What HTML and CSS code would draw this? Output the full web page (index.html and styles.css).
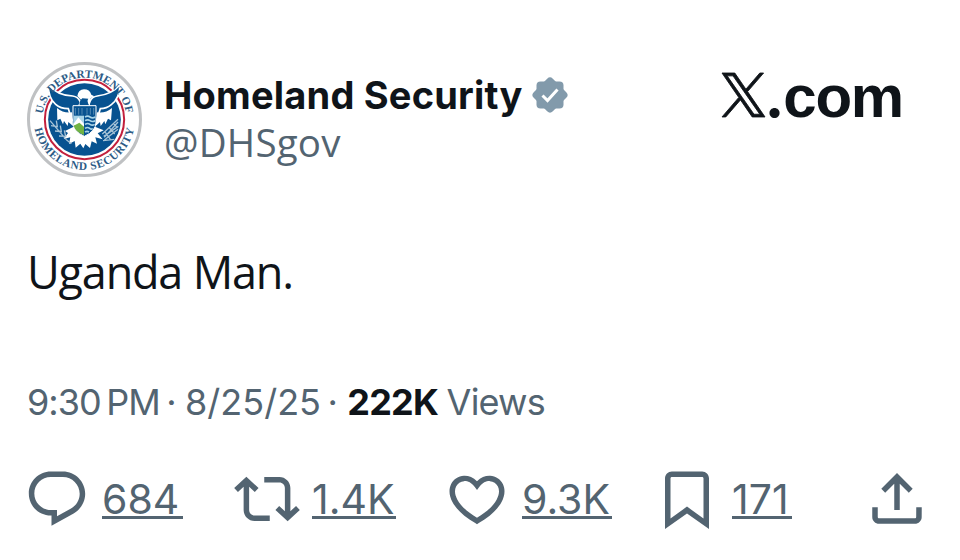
FILE: index.html
```html
<!DOCTYPE html>
<html lang="en">

<head>
    <meta charset="UTF-8">
    <meta name="viewport" content="width=device-width, initial-scale=1.0">
    <title>Homeland Security on X</title>
    <link rel="stylesheet" href="styles.css">
</head>

<body>
    <article class="post">
        <header class="post-header">
            <svg class="avatar" viewBox="20 20 345 345">
                <defs>
                    <path id="seal-top" d="M66 193a126 126 0 0 1 252 0a126 126 0 0 1-12 54" />
                    <path id="seal-bottom" d="M41 193a151 151 0 0 0 302 0" />
                </defs>
                <circle cx="192.500" cy="192.500" r="168" fill="#fff" stroke="#bfc1c3" stroke-width="9" />
                <circle cx="192.500" cy="192.500" r="119" fill="#fff" stroke="#c2203d" stroke-width="6" />
                <circle cx="192.500" cy="192.500" r="109" fill="#075290" />
                <path d="M84 88q26 32 73 34q16 2 22 16l4 12h22l4-12q6-14 22-16q45-6 68-34q-1 40-26 60q-14 12-33 12l-11 35h-74l-11-35q-24 0-38-13q-22-18-22-59z" fill="#075290" stroke="#fff" stroke-width="5" />
                <path d="M171 122q3-19 20-20q17 0 22 16l9 5-11 6-3 22h-35l9-18z" fill="#fff" />
                <path d="M178 151q-2-14 8-22l18 1q-6 6 3 21z" fill="#075290" />
                <path d="M110 158q20 17 45 13l3 41-14-12-2 12-11-15-3 10-8-17-9 5zM275 158q-20 17-45 13l-4 41 13-12 2 12 11-15 3 10 8-17 9 5z" fill="#fff" />
                <path d="M134 227l26-13 32 27 32-27 26 11-18 9 15 18-22-6 5 19-16-7-5 20-14-12-6 13-9-14-14 12-3-20-17 9 4-20-20 5 13-18z" fill="#fff" />
                <path d="M158 151h69v49q0 28-35 43q-34-15-34-43z" fill="#075290" stroke="#fff" stroke-width="3" />
                <path d="M165 158v20M175 158v20M185 158v20M200 158v20M210 158v20M220 158v20" stroke="#78a5c3" stroke-width="2" />
                <path d="M160 181h31v27h-31z" fill="#a8d4e8" />
                <path d="M160 205l14-19 17 20v31q-26-10-31-32z" fill="#fff" />
                <path d="M160 211l17-9 14 12v25q-26-10-31-28z" fill="#71b343" />
                <path d="M194 185q8-5 15 0t16 0M194 196q8-5 15 0t16 0M194 207q8-5 15 0t14 0M194 219q8-5 14 0t9 0M194 230q6-4 12 0" fill="none" stroke="#a8d4e8" stroke-width="5" />
                <path d="M89 196l49 57M92 211l19 3-3-18M104 227l19 2-3-18M116 242l20 1-4-18M138 253l15 12M252 246l41-46M246 236l47-44M250 243l44-30M252 254l41-32M248 256l34-4M253 228l17 24M266 216l17 20M280 205l11 12" fill="none" stroke="#a5c2d6" stroke-width="4" />
                <text class="seal-text"><textPath href="#seal-top" startOffset="17" textLength="360">U.S. DEPARTMENT OF</textPath></text>
                <text class="seal-text"><textPath href="#seal-bottom" startOffset="27" textLength="420">HOMELAND SECURITY</textPath></text>
            </svg>
            <div class="author">
                <div class="name-row">
                    <span class="name">Homeland Security</span>
                    <svg class="badge" viewBox="0 0 36 36">
                        <rect x="4.500" y="4.500" width="27" height="27" rx="4" />
                        <rect x="4.500" y="4.500" width="27" height="27" rx="4" transform="rotate(45 18 18)" />
                        <path d="M10.500 18.500l5 5L25.500 12.500" />
                    </svg>
                </div>
                <div class="handle">@DHSgov</div>
            </div>
            <div class="brand">
                <svg class="brand-logo" viewBox="0 0 1200 1227">
                    <path d="M714.163 519.284L1160.890 0H1055.030L667.137 450.887L357.328 0H0L468.492 681.821L0 1226.370H105.866L515.491 750.218L842.672 1226.370H1200L714.137 519.284ZM569.165 687.828L521.697 619.934L144.011 79.694H306.615L611.412 515.685L658.880 583.579L1055.080 1150.300H892.476Z" />
                </svg>
                <span class="brand-text"><span class="brand-dot">.</span>com</span>
            </div>
        </header>

        <p class="post-text">Uganda Man.</p>

        <div class="meta">
            <span class="time">9:30&#8201;PM</span>
            <span class="dot">·</span>
            <span class="date">8/25/25</span>
            <span class="dot">·</span>
            <span class="views">222K</span>
            <span class="views-label">Views</span>
        </div>

        <footer class="actions">
            <div class="action">
                <svg class="icon" viewBox="0 0 24 24">
                    <path d="M1.751 10c0-4.420 3.584-8 8.005-8h4.366c4.490 0 8.129 3.640 8.129 8.130 0 2.960-1.607 5.680-4.196 7.110l-8.054 4.460v-3.690h-.067c-4.490.1-8.183-3.510-8.183-8.010zm8.005-6c-3.317 0-6.005 2.690-6.005 6 0 3.370 2.770 6.080 6.138 6.010l.351-.010h1.761v2.300l5.087-2.810c1.951-1.080 3.163-3.130 3.163-5.360 0-3.390-2.744-6.130-6.129-6.130H9.756z" />
                </svg>
                <span class="count replies">684</span>
            </div>
            <div class="action">
                <svg class="icon" viewBox="0 0 24 24">
                    <path d="M4.500 3.880l4.432 4.140-1.364 1.460L5.500 7.550V16c0 1.100.896 2 2 2H13v2H7.500c-2.209 0-4-1.790-4-4V7.550L1.432 9.480.068 8.020 4.500 3.880zM16.500 6H11V4h5.500c2.209 0 4 1.790 4 4v8.450l2.068-1.930 1.364 1.460-4.432 4.140-4.432-4.140 1.364-1.460 2.068 1.930V8c0-1.100-.896-2-2-2z" />
                </svg>
                <span class="count reposts">1.4K</span>
            </div>
            <div class="action">
                <svg class="icon" viewBox="0 0 24 24">
                    <path d="M16.697 5.500c-1.222-.060-2.679.510-3.890 2.160l-.805 1.090-.806-1.090C9.984 6.010 8.526 5.440 7.304 5.500c-1.243.070-2.349.780-2.910 1.910-.552 1.120-.633 2.780.479 4.820 1.074 1.970 3.257 4.270 7.129 6.610 3.870-2.340 6.052-4.640 7.126-6.610 1.111-2.040 1.030-3.700.477-4.820-.561-1.130-1.666-1.840-2.908-1.910zm4.187 7.690c-1.351 2.480-4.001 5.120-8.379 7.670l-.503.300-.504-.300c-4.379-2.550-7.029-5.190-8.382-7.670-1.360-2.500-1.410-4.860-.514-6.670.887-1.790 2.647-2.910 4.601-3.010 1.651-.090 3.368.560 4.798 2.010 1.429-1.450 3.146-2.100 4.796-2.010 1.954.100 3.714 1.220 4.601 3.010.896 1.810.846 4.170-.514 6.670z" />
                </svg>
                <span class="count likes">9.3K</span>
            </div>
            <div class="action">
                <svg class="icon" viewBox="0 0 24 24">
                    <path d="M4 4.500C4 3.120 5.119 2 6.500 2h11C18.881 2 20 3.120 20 4.500v18.440l-8-5.710-8 5.710V4.500zM6.500 4c-.276 0-.5.220-.5.500v14.560l6-4.290 6 4.290V4.500c0-.280-.224-.500-.5-.500h-11z" />
                </svg>
                <span class="count bookmarks">171</span>
            </div>
            <div class="action">
                <svg class="icon" viewBox="0 0 24 24">
                    <path d="M12 2.590l5.700 5.700-1.410 1.420L13 6.410V16h-2V6.410l-3.300 3.300-1.410-1.420L12 2.590zM21 15l-.020 3.510c0 1.380-1.120 2.490-2.500 2.490H5.500C4.110 21 3 19.880 3 18.500V15h2v3.500c0 .280.220.500.500.500h12.980c.280 0 .5-.220.5-.500L19 15h2z" />
                </svg>
            </div>
        </footer>
    </article>
</body>

</html>
```

FILE: styles.css
```css
body {
    margin: 0;
    background-color: #fff;
    color: #0f1419;
    font-family: Inter, "Liberation Sans", sans-serif;
}

.post {
    box-sizing: border-box;
    width: 960px;
    height: 560px;
    padding-top: 62px;
    overflow: hidden;
}

.post-header {
    display: flex;
    align-items: flex-start;
    height: 116px;
    padding: 0 57px 0 27px;
}

.avatar {
    width: 115px;
    height: 115px;
    flex: none;
}

.seal-text {
    font-family: "Liberation Serif", serif;
    font-size: 34px;
    font-weight: bold;
    fill: #2c5b86;
}

.author {
    padding: 9px 0 0 22px;
}

.name-row {
    display: flex;
    align-items: center;
    height: 47px;
}

.name {
    width: 368px;
    font-size: 38px;
    font-weight: 700;
    line-height: 48px;
    letter-spacing: 0.2px;
    white-space: nowrap;
}

.badge {
    width: 36px;
    height: 36px;
    fill: #829aab;
}

.badge path {
    fill: none;
    stroke: #fff;
    stroke-width: 3;
}

.handle {
    color: #536471;
    font-family: "Open Sans", sans-serif;
    font-size: 38.5px;
    line-height: 48px;
    letter-spacing: 0.2px;
}

.brand {
    display: flex;
    align-items: flex-start;
    margin-left: auto;
    padding-top: 11px;
}

.brand-logo {
    width: 43px;
    height: 44px;
    margin-right: -1px;
    overflow: visible;
    fill: #0f1419;
    stroke: #0f1419;
    stroke-width: 24;
}

.brand-text {
    margin-top: -2px;
    font-family: "Liberation Sans", Arial, sans-serif;
    font-size: 60px;
    font-weight: 700;
    line-height: 48px;
    letter-spacing: -1.2px;
}

.brand-dot {
    font-family: Inter, sans-serif;
}

.post-text {
    margin: 67px 0 0 27px;
    font-family: "Open Sans", sans-serif;
    font-size: 45px;
    line-height: 54px;
    letter-spacing: -1.2px;
}

.meta {
    display: flex;
    gap: 6.5px;
    margin: 79px 0 0 27px;
    color: #536471;
    font-size: 36px;
    line-height: 48px;
    white-space: nowrap;
}

.time {
    letter-spacing: -1px;
}

.date {
    margin-left: 2px;
}

.views {
    margin-left: 3px;
    color: #0f1419;
    font-weight: 700;
    letter-spacing: -0.8px;
}

.views-label {
    margin-left: 2px;
    letter-spacing: -0.8px;
}

.actions {
    display: grid;
    grid-template-columns: repeat(4, 210px) 66px;
    margin: 40px 0 0 24px;
}

.action {
    display: flex;
    gap: 12px;
}

.icon {
    width: 66px;
    height: 66px;
    flex: none;
    fill: #536471;
}

.count {
    box-sizing: border-box;
    height: 38px;
    margin-top: 15px;
    border-bottom: 3px solid #536471;
    color: #536471;
    font-size: 41px;
    line-height: 36px;
    white-space: nowrap;
}

.replies {
    width: 81px;
}

.reposts {
    width: 84px;
}

.likes {
    width: 90px;
}

.bookmarks {
    width: 60px;
}
```
